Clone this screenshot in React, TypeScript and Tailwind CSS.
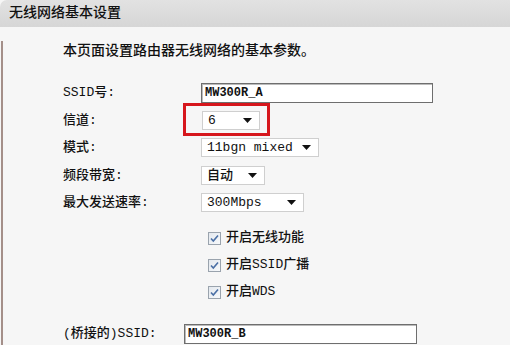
import React from "react";

const font = { fontFamily: '"Liberation Mono", "Noto Sans CJK SC", monospace' };

function Select({ value, width }: { value: string; width: string }) {
    return (
        <div className={`flex h-[19px] items-center justify-between border border-[#cfcfcf] bg-white pl-[5px] pr-[7px] text-[13px] text-[#111] ${width}`}>
            <span className="leading-none">{value}</span>
            <svg width="9" height="5" viewBox="0 0 9 5">
                <path d="M0 0h9L4.5 5z" fill="#111" />
            </svg>
        </div>
    );
}

function Check({ label }: { label: string }) {
    return (
        <div className="flex h-[27px] items-center pl-[205px]">
            <div className="flex h-[13px] w-[13px] items-center justify-center border border-[#9aa3ad] bg-gradient-to-br from-[#e3e8ee] to-[#f7f9fb]">
                <svg width="9" height="9" viewBox="0 0 9 9">
                    <path d="M1 4.5l2.3 2.5L8 1.5" stroke="#4a6fa5" strokeWidth="1.6" fill="none" />
                </svg>
            </div>
            <span className="ml-[5px] text-[13px] font-medium text-[#111]">{label}</span>
        </div>
    );
}

export default function App() {
    return (
        <div className="h-[345px] w-[510px] overflow-hidden bg-[#f6f6f6]" style={font}>
            {/* Title bar */}
            <div className="flex h-[27px] items-center rounded-tl-[7px] bg-gradient-to-b from-[#e2e2e2] to-[#d6d6d6] pl-[9px] text-[14px] font-medium text-[#111]">
                无线网络基本设置
            </div>

            <div className="ml-[1px] h-[318px] border-l-2 border-[#a48f89]">
                <div className="ml-[60px] mt-[14px] flex h-[20px] items-center text-[14px] font-medium text-[#111]">
                    本页面设置路由器无线网络的基本参数。
                </div>

                <div className="mt-[18px] flex flex-col text-[13px] font-medium text-[#111]">
                    <div className="flex h-[27.5px] items-center pl-[60px]">
                        <span className="w-[138px]">SSID号:</span>
                        <div className="flex h-[20px] w-[232px] items-center border border-[#6e6e6e] bg-white pl-[3px] text-[12px] font-bold shadow-[inset_1px_1px_0_#bbb]">
                            MW300R_A
                        </div>
                    </div>

                    <div className="flex h-[27.5px] items-center pl-[60px]">
                        <span className="w-[139px]">信道:</span>
                        <div className="relative">
                            <Select value="6" width="w-[58px]" />
                            {/* annotation box */}
                            <div className="absolute left-[-19px] top-[-8px] h-[33px] w-[87px] border-[3px] border-[#d6161c]" />
                        </div>
                    </div>

                    <div className="flex h-[27.5px] items-center pl-[60px]">
                        <span className="w-[138px]">模式:</span>
                        <Select value="11bgn mixed" width="w-[118px]" />
                    </div>

                    <div className="flex h-[27.5px] items-center pl-[60px]">
                        <span className="w-[138px]">频段带宽:</span>
                        <Select value="自动" width="w-[64px]" />
                    </div>

                    <div className="flex h-[27.5px] items-center pl-[60px]">
                        <span className="w-[138px]">最大发送速率:</span>
                        <Select value="300Mbps" width="w-[103px]" />
                    </div>

                    <div className="mt-[8px]">
                        <Check label="开启无线功能" />
                        <Check label="开启SSID广播" />
                        <Check label="开启WDS" />
                    </div>

                    <div className="mt-[15px] flex h-[27px] items-center pl-[60px]">
                        <span className="w-[121px]">(桥接的)SSID:</span>
                        <div className="flex h-[20px] w-[233px] items-center border border-[#6e6e6e] bg-white pl-[3px] text-[12px] font-bold shadow-[inset_1px_1px_0_#bbb]">
                            MW300R_B
                        </div>
                    </div>
                </div>
            </div>
        </div>
    );
}
